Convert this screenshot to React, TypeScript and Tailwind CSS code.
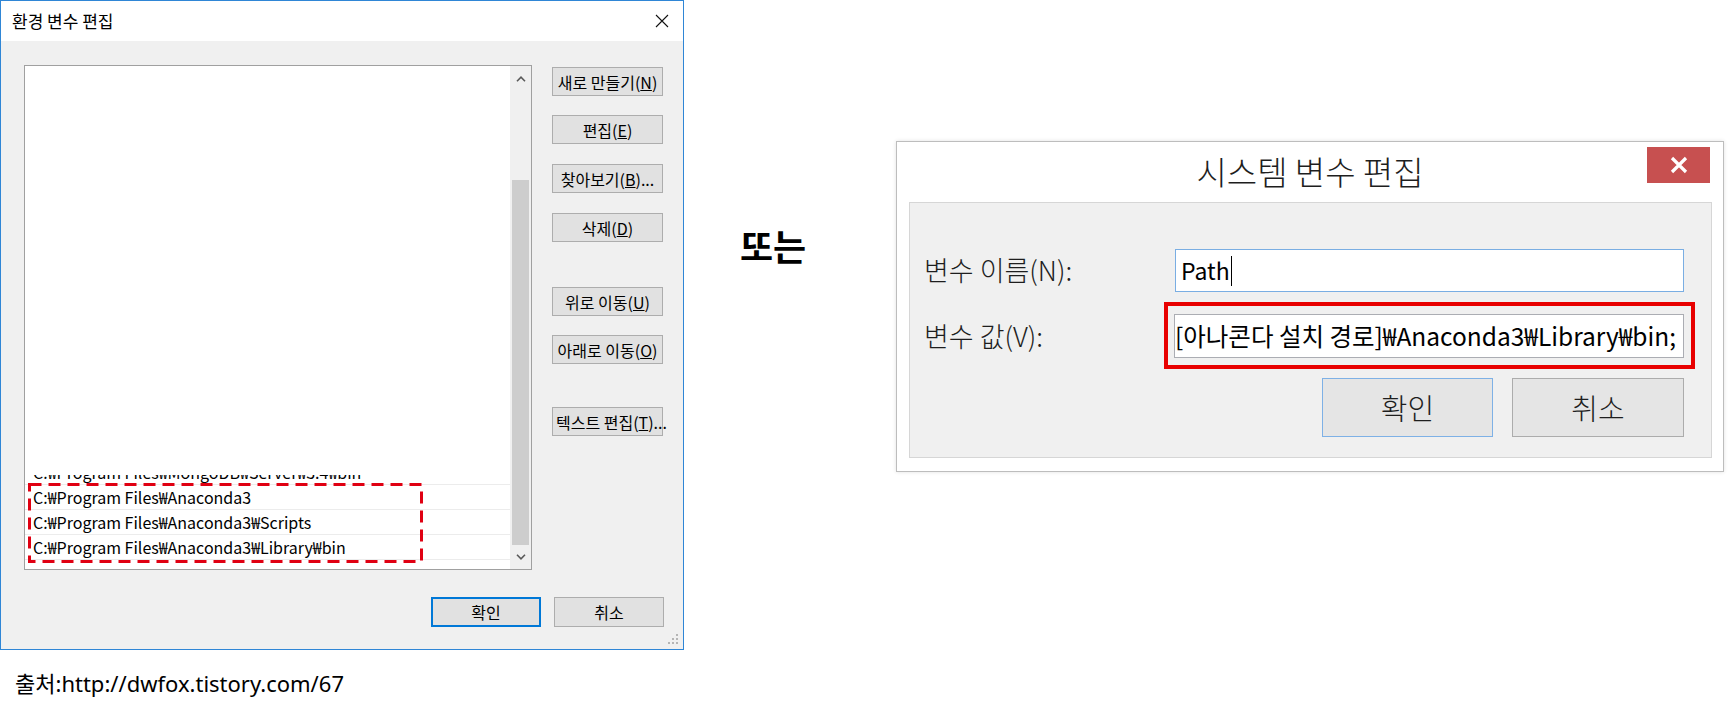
import React from "react";

const kr = "font-['Noto_Sans_CJK_KR',sans-serif]";

function LeftButton({
  children,
  className = "",
}: {
  children: React.ReactNode;
  className?: string;
}) {
  return (
    <div
      className={`h-[29px] w-[111px] flex items-center justify-center whitespace-nowrap bg-[#e1e1e1] border border-[#adadad] text-[16px] text-black leading-none ${className}`}
    >
      {children}
    </div>
  );
}

function Chevron({ up }: { up?: boolean }) {
  return (
    <svg width="10" height="6" viewBox="0 0 10 6">
      <path
        d={up ? "M1 5.2 L5 1.2 L9 5.2" : "M1 0.8 L5 4.8 L9 0.8"}
        fill="none"
        stroke="#5a5a5a"
        strokeWidth="1.6"
      />
    </svg>
  );
}

function ListRow({ text }: { text: string }) {
  return (
    <div className="h-[25px] shrink-0 border-b border-[#ececec] pl-[8px] flex items-center whitespace-nowrap text-[16px] text-black">
      {text}
    </div>
  );
}

function EnvDialog() {
  return (
    <div className="relative w-[684px] h-[650px] border border-[#2f86d6] bg-white flex flex-col">
      {/* title bar */}
      <div className="h-[40px] shrink-0 flex items-center justify-between pl-[11px] pr-[14px]">
        <span className="text-[17px] text-black">환경 변수 편집</span>
        <svg width="14" height="14" viewBox="0 0 14 14">
          <path d="M1 1 L13 13 M13 1 L1 13" stroke="#111" strokeWidth="1.1" />
        </svg>
      </div>

      {/* body */}
      <div className="flex-1 bg-[#f0f0f0] flex flex-col pl-[23px] pr-[19px] pt-[24px]">
        <div className="flex gap-[20px]">
          {/* list box */}
          <div className="w-[508px] h-[505px] border border-[#a0a0a0] bg-white flex">
            <div className="flex-1 flex flex-col pb-[9px] overflow-hidden">
              <div className="flex-1" />
              <div className="h-[10px] shrink-0 overflow-hidden flex flex-col justify-end border-b border-[#ececec]">
                <div className="h-[25px] shrink-0 pl-[8px] flex items-center whitespace-nowrap text-[16px] text-black">
                  C:₩Program Files₩MongoDB₩Server₩3.4₩bin
                </div>
              </div>
              <ListRow text="C:₩Program Files₩Anaconda3" />
              <ListRow text="C:₩Program Files₩Anaconda3₩Scripts" />
              <ListRow text="C:₩Program Files₩Anaconda3₩Library₩bin" />
            </div>
            {/* scrollbar */}
            <div className="w-[21px] shrink-0 bg-[#f0f0f0] flex flex-col">
              <div className="h-[25px] flex items-center justify-center">
                <Chevron up />
              </div>
              <div className="h-[89px]" />
              <div className="h-[365px] mx-[2px] bg-[#cdcdcd]" />
              <div className="flex-1 flex items-center justify-center">
                <Chevron />
              </div>
            </div>
          </div>

          {/* side buttons */}
          <div className="flex flex-col pt-[2px]">
            <LeftButton>
              새로 만들기(<u>N</u>)
            </LeftButton>
            <LeftButton className="mt-[19px]">
              편집(<u>E</u>)
            </LeftButton>
            <LeftButton className="mt-[20px]">
              찾아보기(<u>B</u>)...
            </LeftButton>
            <LeftButton className="mt-[20px]">
              삭제(<u>D</u>)
            </LeftButton>
            <LeftButton className="mt-[45px]">
              위로 이동(<u>U</u>)
            </LeftButton>
            <LeftButton className="mt-[19px]">
              아래로 이동(<u>O</u>)
            </LeftButton>
            <LeftButton className="mt-[43px] justify-start pl-[3px] overflow-visible">
              텍스트 편집(<u>T</u>)...
            </LeftButton>
          </div>
        </div>

        {/* ok / cancel */}
        <div className="flex justify-end gap-[13px] mt-[27px]">
          <div className="h-[30px] w-[110px] flex items-center justify-center bg-[#e1e1e1] border-2 border-[#0078d7] text-[16px] text-black">
            확인
          </div>
          <div className="h-[30px] w-[110px] flex items-center justify-center bg-[#e1e1e1] border border-[#adadad] text-[16px] text-black">
            취소
          </div>
        </div>
      </div>

      {/* dashed highlight */}
      <div className="absolute left-[27px] top-[482px] w-[395px] h-[80px]">
        <svg width="395" height="80" viewBox="0 0 395 80">
          <rect
            x="1.5"
            y="1.5"
            width="392"
            height="77"
            fill="none"
            stroke="#e00012"
            strokeWidth="3"
            strokeDasharray="12 7"
          />
        </svg>
      </div>

      {/* resize grip */}
      <div className="absolute right-[4px] bottom-[4px]">
        <svg width="12" height="12" viewBox="0 0 12 12">
          <g fill="#b5b5b5">
            <rect x="9" y="1" width="2" height="2" />
            <rect x="5" y="5" width="2" height="2" />
            <rect x="9" y="5" width="2" height="2" />
            <rect x="1" y="9" width="2" height="2" />
            <rect x="5" y="9" width="2" height="2" />
            <rect x="9" y="9" width="2" height="2" />
          </g>
        </svg>
      </div>
    </div>
  );
}

function SystemVarDialog() {
  return (
    <div className="relative w-[828px] h-[331px] border border-[#bdbdbd] bg-white flex flex-col shadow-[0_0_4px_rgba(0,0,0,0.12)]">
      <div className="h-[60px] shrink-0 flex items-center justify-center text-[33px] font-light text-[#1e1e1e]">
        시스템 변수 편집
      </div>
      <div className="absolute top-[5px] right-[13px] w-[63px] h-[36px] bg-[#c75050] flex items-center justify-center">
        <svg width="18" height="18" viewBox="0 0 18 18">
          <path d="M2 2 L16 16 M16 2 L2 16" stroke="#fff" strokeWidth="3.2" />
        </svg>
      </div>

      <div className="flex-1 mb-[13px] ml-[12px] mr-[11px] border border-[#d6d6d6] bg-[#f0f0f0] flex flex-col pt-[46px] pr-[27px] pb-[20px]">
        {/* name row */}
        <div className="flex items-center">
          <div className="w-[265px] pl-[14px] text-[27px] font-light text-[#1e1e1e] whitespace-nowrap">변수 이름(N):</div>
          <div className="w-[509px] h-[43px] bg-white border border-[#7aaee3] flex items-center pl-[5px] text-[23px] text-black">
            Path
            <span className="ml-[1px] w-[1px] h-[30px] bg-black" />
          </div>
        </div>

        {/* value row */}
        <div className="flex items-center mt-[22px]">
          <div className="w-[264px] pl-[14px] text-[27px] font-light text-[#1e1e1e] whitespace-nowrap">변수 값(V):</div>
          <div className="relative w-[510px] h-[44px]">
            <div className="w-full h-full bg-white border border-[#abadb3] flex items-center justify-end overflow-hidden pr-[7px] text-[24.5px] text-black whitespace-nowrap">
              ;[아나콘다 설치 경로]₩Anaconda3₩Library₩bin;
            </div>
            <div className="absolute -left-[10px] -top-[12px] -right-[11px] -bottom-[11px] border-[4px] border-[#e80000]" />
          </div>
        </div>

        {/* buttons */}
        <div className="flex justify-end gap-[19px] mt-[20px]">
          <div className="w-[171px] h-[59px] bg-[#e5e5e5] border border-[#7eb1e6] flex items-center justify-center text-[29px] font-light text-[#1e1e1e]">
            확인
          </div>
          <div className="w-[172px] h-[59px] bg-[#e5e5e5] border border-[#acacac] flex items-center justify-center text-[29px] font-light text-[#1e1e1e]">
            취소
          </div>
        </div>
      </div>
    </div>
  );
}

export default function App() {
  return (
    <div className={`w-[1729px] h-[711px] bg-white flex items-start ${kr}`}>
      <div className="flex flex-col w-[684px] shrink-0">
        <EnvDialog />
        <div className="mt-[18px] pl-[15px] leading-[30px] text-[22px] text-black font-['Noto_Sans','Noto_Sans_CJK_KR',sans-serif]">
          출처:http://dwfox.tistory.com/67
        </div>
      </div>
      <div className="w-[212px] shrink-0 pl-[56px] mt-[223px] text-[36px] leading-[44px] font-bold text-black">
        또는
      </div>
      <div className="mt-[141px] shrink-0">
        <SystemVarDialog />
      </div>
    </div>
  );
}
